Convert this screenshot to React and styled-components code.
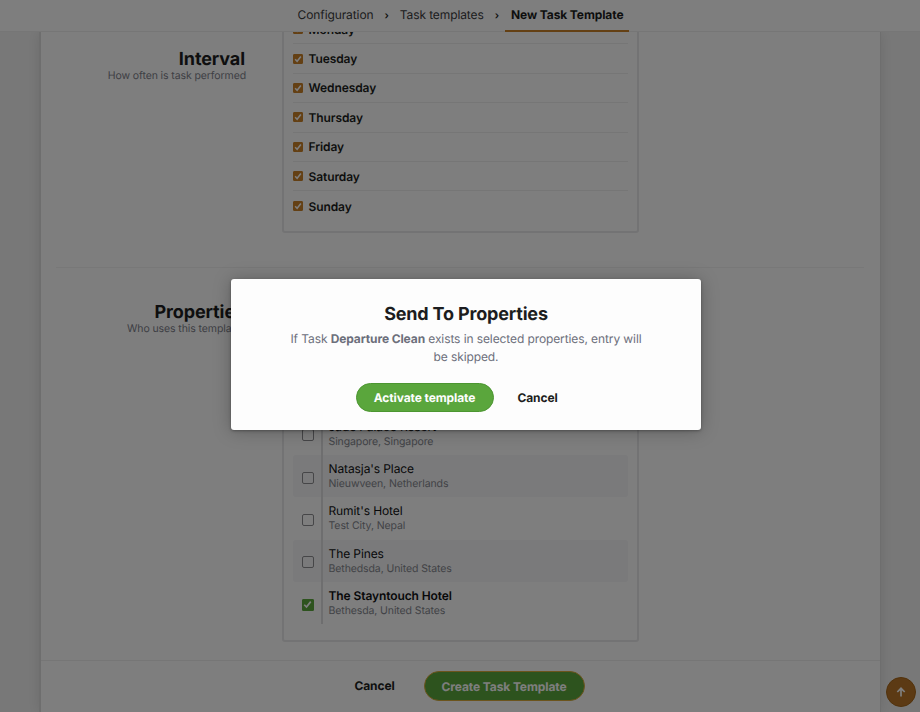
import React from 'react'
import { styled, createGlobalStyle } from 'styled-components';


const GlobalStyle = createGlobalStyle`
  * {
    box-sizing: border-box;
  }

  body {
    margin: 0;
    font-family: Inter, "Liberation Sans", sans-serif;
    font-size: 12px;
    letter-spacing: -0.1px;
    color: #1c1d20;
    text-rendering: geometricPrecision;
  }

  button {
    font-family: inherit;
    letter-spacing: inherit;
    text-rendering: inherit;
    cursor: pointer;
  }
`;

const Screen = styled.div`
  position: relative;
  display: flex;
  flex-direction: column;
  height: 712px;
  overflow: hidden;
  background: #f1f1f1;
`;

const Header = styled.header`
  position: relative;
  z-index: 1;
  display: flex;
  justify-content: center;
  align-items: stretch;
  gap: 11px;
  height: 32px;
  flex: none;
  padding-left: 7px;
  background: #fdfdfd;
  border-bottom: 1px solid #ececec;
`;

const Crumb = styled.a`
  display: flex;
  align-items: center;
  height: 32px;
  padding: ${(p) => (p.$active ? '0 6px 1px' : '0 0 3px')};
  margin-left: ${(p) => (p.$active ? '-5px' : '0')};
  border-bottom: ${(p) => (p.$active ? '2px solid #c98028' : 'none')};
  font-size: 12px;
  font-weight: ${(p) => (p.$active ? 700 : 400)};
  color: ${(p) => (p.$active ? '#1c1d20' : '#3a3b3e')};
`;

const Separator = styled.span`
  display: flex;
  align-items: center;
  padding-bottom: 1px;
  font-size: 10.5px;
  font-weight: 600;
`;

const Sheet = styled.main`
  display: flex;
  flex-direction: column;
  flex: 1;
  min-height: 0;
  margin: 0 40px;
  background: #fdfdfd;
  border-left: 1px solid #dcdcdc;
  box-shadow: 0 0 0 1px #dcdcdc, 0 0 14px rgba(0, 0, 0, 0.12);
`;

const Scroll = styled.div`
  flex: 1;
  min-height: 0;
  overflow: hidden;
  padding: 0 16px 0 15px;
`;

const Section = styled.section`
  display: flex;
  gap: 35.5px;
  height: ${(p) => p.$height}px;
  padding-top: ${(p) => p.$top || 0}px;
  border-bottom: ${(p) => (p.$divided ? '1px solid #f0f0f0' : 'none')};
`;

const Label = styled.div`
  width: 190px;
  padding-top: ${(p) => p.$top}px;
  text-align: right;
`;

const LabelTitle = styled.h2`
  margin: 0;
  padding-right: 1px;
  font-size: 18px;
  line-height: 21px;
  font-weight: 700;
`;

const LabelHint = styled.p`
  margin: 0;
  font-size: 10.5px;
  line-height: 12px;
  color: #7d808a;
`;

const Panel = styled.div`
  width: 357.5px;
  height: ${(p) => p.$height}px;
  margin-top: ${(p) => p.$top || 0}px;
  padding: ${(p) => p.$pad || 0}px 9.5px 0;
  border: 2px solid #e6e6e8;
  border-radius: 3px;
`;

const Day = styled.label`
  display: flex;
  align-items: center;
  gap: 5.5px;
  height: 29.4px;
  font-size: 12px;
  font-weight: 600;
  border-bottom: 1px solid #ececec;

  &:last-child {
    border-bottom: none;
  }
`;

const Box = styled.span`
  display: flex;
  align-items: center;
  justify-content: center;
  flex: none;
  width: ${(p) => p.$size}px;
  height: ${(p) => p.$size}px;
  border: 1px solid ${(p) => p.$color || '#8d8d90'};
  border-radius: ${(p) => (p.$color ? 1 : 2)}px;
  background: ${(p) => p.$color || 'transparent'};
`;

const Property = styled.label`
  display: flex;
  height: 42.35px;
  border-radius: 3px;
  background: ${(p) => (p.$shaded ? '#f5f5f6' : 'transparent')};
`;

const BoxCell = styled.span`
  display: flex;
  align-items: center;
  justify-content: flex-end;
  width: 29.5px;
  padding: 3px 7px 0 0;
  border-right: 2px solid #dcdcdf;
`;

const PropertyText = styled.span`
  padding: 6px 0 0 6px;
`;

const PropertyName = styled.span`
  display: block;
  font-size: 12px;
  line-height: 15px;
  font-weight: ${(p) => (p.$bold ? 600 : 400)};
  color: #0f1012;
`;

const PropertyPlace = styled.span`
  display: block;
  font-size: 10.5px;
  line-height: 15px;
  color: #84868e;
`;

const Footer = styled.footer`
  display: flex;
  justify-content: center;
  align-items: flex-start;
  gap: 11px;
  height: 52px;
  padding-top: 10px;
  border-top: 1px solid #ececec;
`;

const Button = styled.button`
  height: ${(p) => p.$height || 29}px;
  width: ${(p) => p.$width}px;
  padding: 0;
  border: 1px solid ${(p) => p.$ring || '#4c9631'};
  border-radius: 15px;
  background: #5aa63c;
  color: #fdfdfd;
  font-size: 12px;
  font-weight: 700;
`;

const TextButton = styled.button`
  width: 76px;
  height: 29px;
  padding: 0;
  border: none;
  background: none;
  color: #1c1d20;
  font-size: 12px;
  font-weight: 700;
`;

const ToTop = styled.button`
  position: absolute;
  right: 4px;
  bottom: 5px;
  display: flex;
  align-items: center;
  justify-content: center;
  width: 30px;
  height: 30px;
  padding: 0;
  border: 1px solid #a5661a;
  border-radius: 50%;
  background: #b87428;
`;

const Overlay = styled.div`
  position: absolute;
  inset: 0;
  z-index: 2;
  display: flex;
  align-items: flex-start;
  justify-content: center;
  padding: 279px 0 0 12px;
  background: rgba(0, 0, 0, 0.5);
`;

const Dialog = styled.div`
  width: 470px;
  height: 151px;
  padding-top: 24px;
  border-radius: 3px;
  background: #fdfdfd;
  box-shadow: 0 1px 18px rgba(0, 0, 0, 0.25), 0 1px 3px rgba(0, 0, 0, 0.3);
  text-align: center;
`;

const DialogTitle = styled.h1`
  margin: 0;
  font-size: 18px;
  line-height: 23px;
  font-weight: 700;
  letter-spacing: -0.18px;
`;

const DialogText = styled.p`
  width: 360px;
  margin: 4px auto 0;
  font-size: 12px;
  line-height: 17.7px;
  color: #6c6f7b;
`;

const DialogActions = styled.div`
  display: flex;
  justify-content: center;
  gap: 6px;
  margin-top: 18px;
  padding-right: 1px;
`;

const Check = ({ size }) => (
  <svg width={size} height={size} viewBox="0 0 10 10" fill="none" stroke="#fdfdfd" strokeWidth="1.9">
    <path d="M1.4 5.3 L3.9 7.8 L8.6 1.8" />
  </svg>
)

const days = ['Monday', 'Tuesday', 'Wednesday', 'Thursday', 'Friday', 'Saturday', 'Sunday']

const properties = [
  { name: 'Jade Palace Resort', place: 'Singapore, Singapore' },
  { name: "Natasja's Place", place: 'Nieuwveen, Netherlands' },
  { name: "Rumit's Hotel", place: 'Test City, Nepal' },
  { name: 'The Pines', place: 'Bethedsda, United States' },
  { name: 'The Stayntouch Hotel', place: 'Bethesda, United States', checked: true },
]

const App = () => {
  return (
    <Screen>
      <GlobalStyle />
      <Header>
        <Crumb>Configuration</Crumb>
        <Separator>›</Separator>
        <Crumb>Task templates</Crumb>
        <Separator>›</Separator>
        <Crumb $active>New Task Template</Crumb>
      </Header>
      <Sheet>
        <Scroll>
          <Section $height={236} $divided>
            <Label $top={17}>
              <LabelTitle>Interval</LabelTitle>
              <LabelHint>How often is task performed</LabelHint>
            </Label>
            <Panel $height={220.5} $top={-20} $pad={1}>
              {days.map((day) => (
                <Day key={day}>
                  <Box $size={10} $color="#c98028"><Check size={8} /></Box>
                  {day}
                </Day>
              ))}
            </Panel>
          </Section>
          <Section $height={392} $top={33}>
            <Label $top={1}>
              <LabelTitle>Properties</LabelTitle>
              <LabelHint>Who uses this template?</LabelHint>
            </Label>
            <Panel $height={341} $pad={109.7}>
              {properties.map((p, i) => (
                <Property key={p.name} $shaded={i % 2 === 1}>
                  <BoxCell>
                    <Box $size={12} $color={p.checked && '#5aa63c'}>
                      {p.checked && <Check size={9} />}
                    </Box>
                  </BoxCell>
                  <PropertyText>
                    <PropertyName $bold={p.checked}>{p.name}</PropertyName>
                    <PropertyPlace>{p.place}</PropertyPlace>
                  </PropertyText>
                </Property>
              ))}
            </Panel>
          </Section>
        </Scroll>
        <Footer>
          <TextButton>Cancel</TextButton>
          <Button $width={161} $height={30} $ring="#d9a83a">Create Task Template</Button>
        </Footer>
      </Sheet>
      <ToTop>
        <svg width="10" height="10" viewBox="0 0 10 10" fill="none" stroke="#fdfdfd" strokeWidth="1.7">
          <path d="M5 9.5 V1.5 M1.3 5 L5 1.3 L8.7 5" />
        </svg>
      </ToTop>
      <Overlay>
        <Dialog>
          <DialogTitle>Send To Properties</DialogTitle>
          <DialogText>
            If Task <b>Departure Clean</b> exists in selected properties, entry will be skipped.
          </DialogText>
          <DialogActions>
            <Button $width={138}>Activate template</Button>
            <TextButton>Cancel</TextButton>
          </DialogActions>
        </Dialog>
      </Overlay>
    </Screen>
  )
}

export default App
